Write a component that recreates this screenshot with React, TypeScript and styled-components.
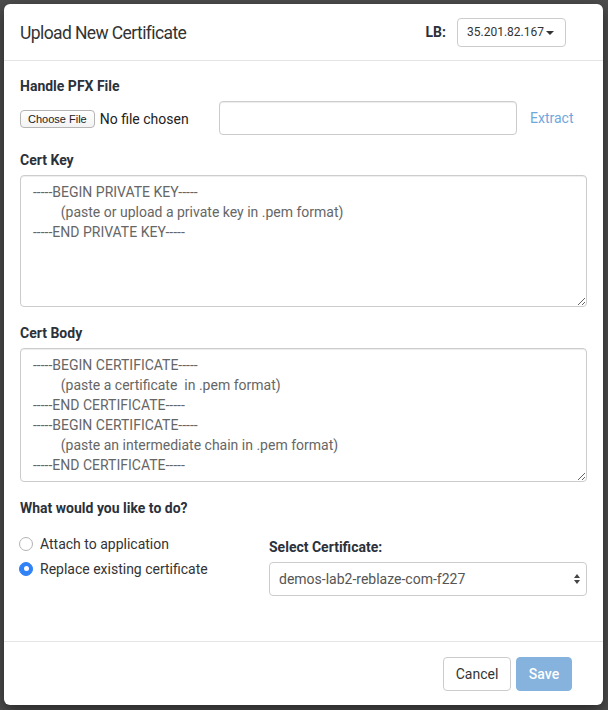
import React from "react";
import styled, { createGlobalStyle } from "styled-components";

const GlobalStyle = createGlobalStyle`
  html, body {
    margin: 0;
    padding: 0;
    background: #4d4d4d;
    font-family: Roboto, "Noto Sans", "Liberation Sans", sans-serif;
  }
  * { box-sizing: border-box; }
`;

const Page = styled.div`
  padding: 4px;
  min-height: 710px;
`;

const Modal = styled.div`
  width: 599px;
  background: #fff;
  border-radius: 6px;
  box-shadow: 0 5px 15px rgba(0, 0, 0, 0.5);
  display: flex;
  flex-direction: column;
`;

const Header = styled.div`
  height: 57px;
  padding: 0 37px 0 16px;
  border-bottom: 1px solid #e5e5e5;
  display: flex;
  align-items: center;
  justify-content: space-between;
`;

const Title = styled.h4`
  margin: 1px 0 0;
  font-size: 17.5px;
  font-weight: 400;
  letter-spacing: -0.6px;
  color: #333;
`;

const LbGroup = styled.div`
  display: flex;
  align-items: center;
  gap: 11px;
`;

const BoldLabel = styled.span`
  font-size: 14px;
  font-weight: 700;
  color: #2b313a;
`;

const DropButton = styled.button`
  height: 29px;
  width: 109px;
  padding: 0 8px 0 9px;
  border: 1px solid #ccc;
  border-radius: 4px;
  background: #fff;
  color: #333;
  font-family: inherit;
  font-size: 12px;
  display: flex;
  align-items: center;
  gap: 2px;
`;

const Caret = styled.span`
  width: 0;
  height: 0;
  border-left: 4px solid transparent;
  border-right: 4px solid transparent;
  border-top: 4px solid #333;
  margin-top: 1px;
`;

const Body = styled.div`
  padding: 15px 16px 45px;
`;

const SectionLabel = styled.label<{ $gap?: number }>`
  display: block;
  font-size: 14px;
  font-weight: 700;
  line-height: 20px;
  color: #2b313a;
  margin: ${(p) => p.$gap ?? 0}px 0 5px;
`;

const PfxRow = styled.div`
  display: flex;
  align-items: center;
  height: 34px;
`;

const FilePicker = styled.div`
  width: 199px;
  display: flex;
  align-items: center;
  gap: 5px;
  padding-top: 2px;
`;

const FileButton = styled.button`
  height: 18px;
  padding: 0 7px;
  font-family: "Liberation Sans", Arial, sans-serif;
  font-size: 11px;
  color: #222;
  background: linear-gradient(#fff, #f3f3f3);
  border: 1px solid #b5b5b5;
  border-radius: 4px;
`;

const FileStatus = styled.span`
  font-size: 14px;
  color: #222;
`;

const TextInput = styled.input`
  width: 298px;
  height: 34px;
  border: 1px solid #ccc;
  border-radius: 4px;
  box-shadow: inset 0 1px 1px rgba(0, 0, 0, 0.075);
  outline: none;
`;

const ExtractLink = styled.a`
  margin-left: 13px;
  font-size: 14px;
  color: #6fa8dc;
  text-decoration: none;
`;

const CertArea = styled.textarea<{ $h: number }>`
  display: block;
  width: 100%;
  height: ${(p) => p.$h}px;
  padding: 6px 12px;
  border: 1px solid #ccc;
  border-radius: 4px;
  box-shadow: inset 0 1px 1px rgba(0, 0, 0, 0.075);
  font-family: Roboto, "Noto Sans", sans-serif;
  font-size: 14px;
  line-height: 20px;
  color: #666;
  resize: vertical;
  outline: none;
  white-space: pre;
  overflow: hidden;
`;

const ChoiceGrid = styled.div`
  display: grid;
  grid-template-columns: 249px 1fr;
`;

const RadioColumn = styled.div`
  padding-top: 8px;
  display: flex;
  flex-direction: column;
`;

const RadioRow = styled.label`
  height: 25px;
  display: flex;
  align-items: center;
  gap: 7px;
  font-size: 14px;
  color: #333;
`;

const RadioCircle = styled.span<{ $checked?: boolean }>`
  width: 14px;
  height: 14px;
  margin-left: -1px;
  border-radius: 50%;
  border: 1px solid ${(p) => (p.$checked ? "#3182f6" : "#b4b4b4")};
  background: ${(p) => (p.$checked ? "#3182f6" : "#fff")};
  display: flex;
  align-items: center;
  justify-content: center;
  &::after {
    content: "";
    width: 5px;
    height: 5px;
    border-radius: 50%;
    background: ${(p) => (p.$checked ? "#fff" : "transparent")};
  }
`;

const SelectColumn = styled.div`
  padding-top: 14px;
`;

const SelectBox = styled.div`
  height: 34px;
  border: 1px solid #ccc;
  border-radius: 4px;
  padding: 0 5px 0 9px;
  display: flex;
  align-items: center;
  justify-content: space-between;
  font-size: 14px;
  color: #555;
`;

const Footer = styled.div`
  border-top: 1px solid #e5e5e5;
  padding: 15px 31px 14px;
  display: flex;
  justify-content: flex-end;
  gap: 5px;
`;

const Button = styled.button<{ $primary?: boolean }>`
  height: 34px;
  min-width: ${(p) => (p.$primary ? 56 : 68)}px;
  padding: 0 10px;
  border-radius: 4px;
  font-family: inherit;
  font-size: 14px;
  font-weight: ${(p) => (p.$primary ? 500 : 400)};
  border: 1px solid ${(p) => (p.$primary ? "#85b3dd" : "#ccc")};
  background: ${(p) => (p.$primary ? "#85b3dd" : "#fff")};
  color: ${(p) => (p.$primary ? "#fff" : "#333")};
`;

const keyText = `-----BEGIN PRIVATE KEY-----
        (paste or upload a private key in .pem format)
-----END PRIVATE KEY-----`;

const bodyText = `-----BEGIN CERTIFICATE-----
        (paste a certificate  in .pem format)
-----END CERTIFICATE-----
-----BEGIN CERTIFICATE-----
        (paste an intermediate chain in .pem format)
-----END CERTIFICATE-----`;

export default function App() {
  return (
    <>
      <GlobalStyle />
      <Page>
        <Modal>
          <Header>
            <Title>Upload New Certificate</Title>
            <LbGroup>
              <BoldLabel>LB:</BoldLabel>
              <DropButton>
                35.201.82.167
                <Caret />
              </DropButton>
            </LbGroup>
          </Header>
          <Body>
            <SectionLabel>Handle PFX File</SectionLabel>
            <PfxRow>
              <FilePicker>
                <FileButton>Choose File</FileButton>
                <FileStatus>No file chosen</FileStatus>
              </FilePicker>
              <TextInput />
              <ExtractLink>Extract</ExtractLink>
            </PfxRow>
            <SectionLabel $gap={15}>Cert Key</SectionLabel>
            <CertArea $h={132} defaultValue={keyText} spellCheck={false} />
            <SectionLabel $gap={16}>Cert Body</SectionLabel>
            <CertArea $h={134} defaultValue={bodyText} spellCheck={false} />
            <SectionLabel $gap={16}>What would you like to do?</SectionLabel>
            <ChoiceGrid>
              <RadioColumn>
                <RadioRow>
                  <RadioCircle />
                  Attach to application
                </RadioRow>
                <RadioRow>
                  <RadioCircle $checked />
                  Replace existing certificate
                </RadioRow>
              </RadioColumn>
              <SelectColumn>
                <SectionLabel>Select Certificate:</SectionLabel>
                <SelectBox>
                  demos-lab2-reblaze-com-f227
                  <svg width="8" height="12" viewBox="0 0 8 12">
                    <path d="M4 1 L7 5 H1 Z M4 11 L7 7 H1 Z" fill="#444" />
                  </svg>
                </SelectBox>
              </SelectColumn>
            </ChoiceGrid>
          </Body>
          <Footer>
            <Button>Cancel</Button>
            <Button $primary>Save</Button>
          </Footer>
        </Modal>
      </Page>
    </>
  );
}
